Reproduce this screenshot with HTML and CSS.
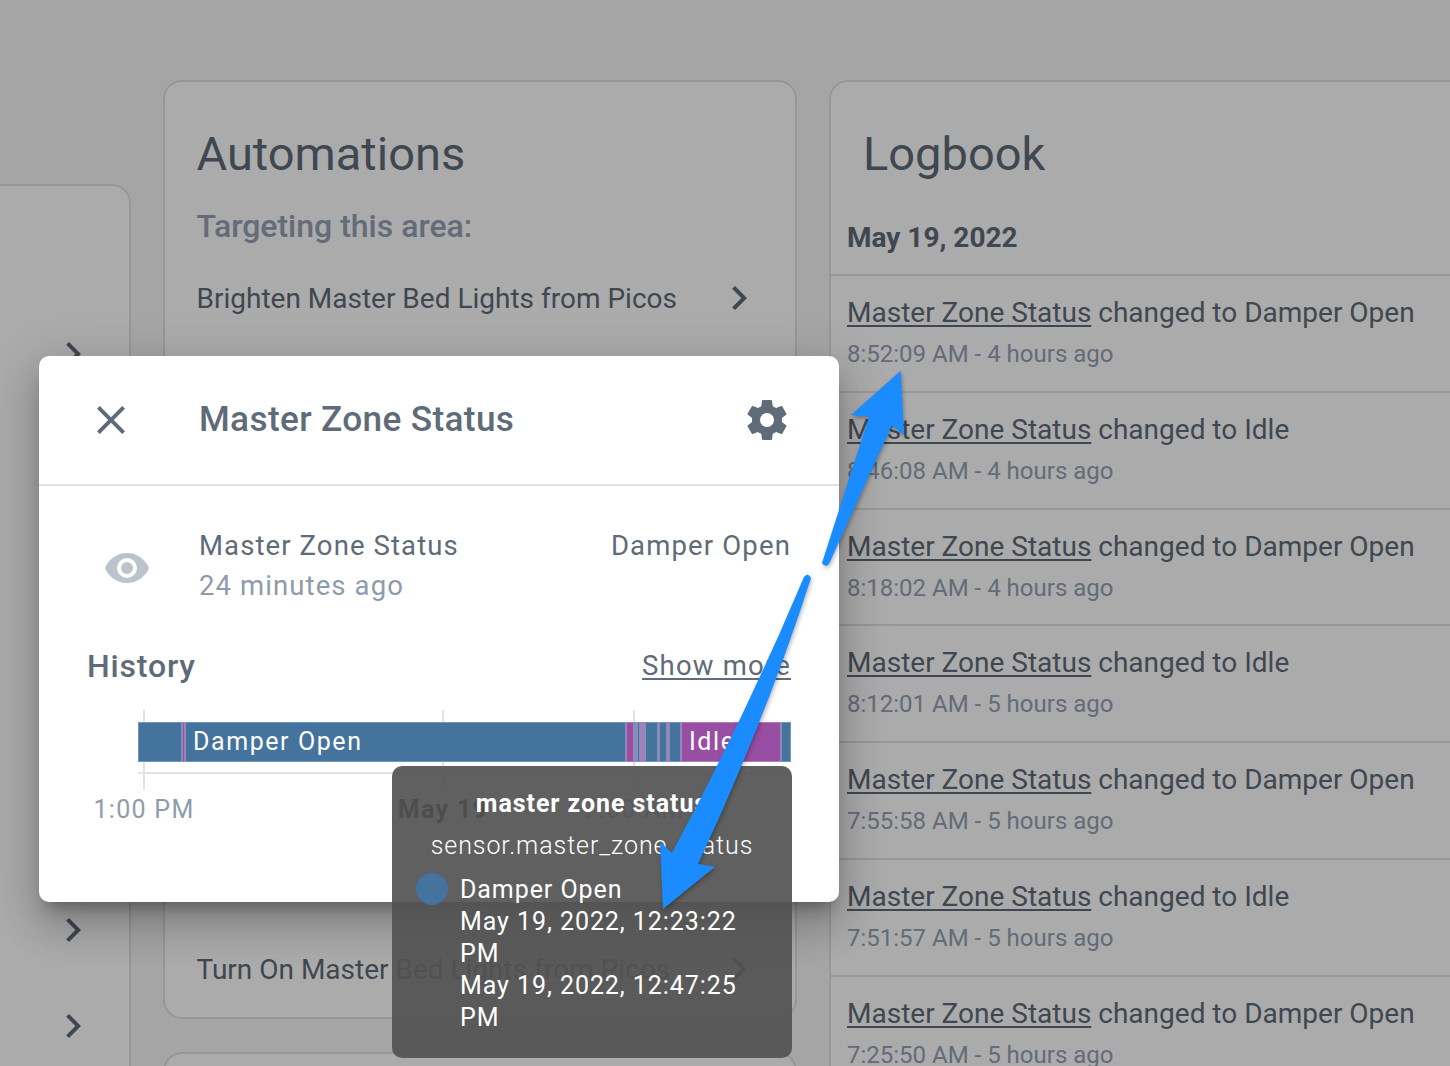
FILE: index.html
```html
<!DOCTYPE html>
<html lang="en">
<head>
<meta charset="utf-8">
<title>Master Zone Status</title>
<link rel="stylesheet" href="styles.css">
</head>
<body>
<div class="stage">
  <main class="page">
    <section class="card card-side">
      <div class="side-row"><svg class="icon chev" viewBox="0 0 24 24"><path d="M8.59,16.58L13.17,12L8.59,7.41L10,6L16,12L10,18L8.59,16.58Z"/></svg></div>
      <div class="side-row"></div>
      <div class="side-row"></div>
      <div class="side-row"></div>
      <div class="side-row"></div>
      <div class="side-row"></div>
      <div class="side-row"><svg class="icon chev" viewBox="0 0 24 24"><path d="M8.59,16.58L13.17,12L8.59,7.41L10,6L16,12L10,18L8.59,16.58Z"/></svg></div>
      <div class="side-row"><svg class="icon chev" viewBox="0 0 24 24"><path d="M8.59,16.58L13.17,12L8.59,7.41L10,6L16,12L10,18L8.59,16.58Z"/></svg></div>
    </section>

    <div class="column-mid">
      <section class="card card-auto">
        <h2 class="card-title">Automations</h2>
        <h3 class="sub-title">Targeting this area:</h3>
        <div class="auto-row"><span>Brighten Master Bed Lights from Picos</span><svg class="icon chev" viewBox="0 0 24 24"><path d="M8.59,16.58L13.17,12L8.59,7.41L10,6L16,12L10,18L8.59,16.58Z"/></svg></div>
        <div class="auto-gap"></div>
        <div class="auto-row"><span>Turn On Master Bed Lights from Picos</span><svg class="icon chev" viewBox="0 0 24 24"><path d="M8.59,16.58L13.17,12L8.59,7.41L10,6L16,12L10,18L8.59,16.58Z"/></svg></div>
      </section>
      <section class="card card-next"></section>
    </div>

    <section class="card card-log">
      <h2 class="card-title log-title">Logbook</h2>
      <div class="log-date">May 19, 2022</div>
      <div class="log-row"><div class="log-main"><a>Master Zone Status</a> changed to Damper Open</div><div class="log-time">8:52:09 AM - 4 hours ago</div></div>
      <div class="log-row"><div class="log-main"><a>Master Zone Status</a> changed to Idle</div><div class="log-time">8:46:08 AM - 4 hours ago</div></div>
      <div class="log-row"><div class="log-main"><a>Master Zone Status</a> changed to Damper Open</div><div class="log-time">8:18:02 AM - 4 hours ago</div></div>
      <div class="log-row"><div class="log-main"><a>Master Zone Status</a> changed to Idle</div><div class="log-time">8:12:01 AM - 5 hours ago</div></div>
      <div class="log-row"><div class="log-main"><a>Master Zone Status</a> changed to Damper Open</div><div class="log-time">7:55:58 AM - 5 hours ago</div></div>
      <div class="log-row"><div class="log-main"><a>Master Zone Status</a> changed to Idle</div><div class="log-time">7:51:57 AM - 5 hours ago</div></div>
      <div class="log-row"><div class="log-main"><a>Master Zone Status</a> changed to Damper Open</div><div class="log-time">7:25:50 AM - 5 hours ago</div></div>
    </section>
  </main>

  <div class="scrim"></div>

  <div class="modal">
    <header class="modal-head">
      <svg class="icon icon-close" viewBox="0 0 24 24"><path d="M19,6.41L17.59,5L12,10.59L6.41,5L5,6.41L10.59,12L5,17.59L6.41,19L12,13.41L17.59,19L19,17.59L13.41,12L19,6.41Z"/></svg>
      <h1 class="modal-title">Master Zone Status</h1>
      <svg class="icon icon-cog" viewBox="0 0 24 24"><path d="M12,15.5A3.5,3.5 0 0,1 8.5,12A3.5,3.5 0 0,1 12,8.5A3.5,3.5 0 0,1 15.5,12A3.5,3.5 0 0,1 12,15.5M19.43,12.97C19.47,12.65 19.5,12.33 19.5,12C19.5,11.67 19.47,11.34 19.43,11L21.54,9.37C21.73,9.22 21.78,8.95 21.66,8.73L19.66,5.27C19.54,5.05 19.27,4.96 19.05,5.05L16.56,6.05C16.04,5.66 15.5,5.32 14.87,5.07L14.5,2.42C14.46,2.18 14.25,2 14,2H10C9.75,2 9.54,2.18 9.5,2.42L9.13,5.07C8.5,5.32 7.96,5.66 7.44,6.05L4.95,5.05C4.73,4.96 4.46,5.05 4.34,5.27L2.34,8.73C2.21,8.95 2.27,9.22 2.46,9.37L4.57,11C4.53,11.34 4.5,11.67 4.5,12C4.5,12.33 4.53,12.65 4.57,12.97L2.46,14.63C2.27,14.78 2.21,15.05 2.34,15.27L4.34,18.73C4.46,18.95 4.73,19.03 4.95,18.95L7.44,17.94C7.96,18.34 8.5,18.68 9.13,18.93L9.5,21.58C9.54,21.82 9.75,22 10,22H14C14.25,22 14.46,21.82 14.5,21.58L14.87,18.93C15.5,18.67 16.04,18.34 16.56,17.94L19.05,18.95C19.27,19.03 19.54,18.95 19.66,18.73L21.66,15.27C21.78,15.05 21.73,14.78 21.54,14.63L19.43,12.97Z"/></svg>
    </header>
    <div class="modal-body">
      <div class="info-row">
        <svg class="icon icon-eye" viewBox="0 0 24 24"><path d="M12,9A3,3 0 0,0 9,12A3,3 0 0,0 12,15A3,3 0 0,0 15,12A3,3 0 0,0 12,9M12,17A5,5 0 0,1 7,12A5,5 0 0,1 12,7A5,5 0 0,1 17,12A5,5 0 0,1 12,17M12,4.5C7,4.5 2.73,7.61 1,12C2.73,16.39 7,19.5 12,19.5C17,19.5 21.27,16.39 23,12C21.27,7.61 17,4.5 12,4.5Z"/></svg>
        <div class="info-text">
          <div class="info-name">Master Zone Status</div>
          <div class="info-ago">24 minutes ago</div>
        </div>
        <div class="info-state">Damper Open</div>
      </div>
      <div class="history-head">
        <h2 class="history-title">History</h2>
        <a class="show-more">Show more</a>
      </div>
      <div class="chart">
        <i class="grid-v grid-a"></i><i class="grid-v grid-b"></i><i class="grid-v grid-c"></i>
        <div class="bar">
          <div class="seg blue" style="width:44px"></div>
          <div class="seg purple" style="width:3px"></div>
          <div class="seg blue" style="width:441px"><span>Damper Open</span></div>
          <div class="seg purple" style="width:8.3px"></div>
          <div class="seg blue" style="width:1.4px"></div>
          <div class="seg purple" style="width:1.3px"></div>
          <div class="seg blue" style="width:3px"></div>
          <div class="seg purple" style="width:1.7px"></div>
          <div class="seg blue" style="width:1px"></div>
          <div class="seg purple" style="width:2.6px"></div>
          <div class="seg blue" style="width:12.4px"></div>
          <div class="seg purple" style="width:1.6px"></div>
          <div class="seg blue" style="width:7.4px"></div>
          <div class="seg purple" style="width:2.3px"></div>
          <div class="seg blue" style="width:12px"></div>
          <div class="seg purple" style="width:100px"><span>Idle</span></div>
          <div class="seg blue" style="width:10px"></div>
        </div>
        <div class="axis">
          <span class="tick tick-a">1:00 PM</span>
          <span class="tick tick-b">May 19</span>
          <span class="tick tick-c">7:00 AM</span>
        </div>
      </div>
    </div>
  </div>

  <div class="tooltip">
    <div class="tip-title">master zone status</div>
    <div class="tip-id">sensor.master_zone_status</div>
    <div class="tip-row">
      <span class="tip-dot"></span>
      <div class="tip-lines">
        <div>Damper Open</div>
        <div>May 19, 2022, 12:23:22 PM</div>
        <div>May 19, 2022, 12:47:25 PM</div>
      </div>
    </div>
  </div>

  <svg class="arrows" viewBox="0 0 1450 1066">
    <path d="M900.7,370.7 L851,415 L869,416.7 L822,563 Q825,568 829,564 L891.7,425.7 L904,435 Z"/>
    <path d="M663,909 L715,866.7 L698,864 Q765,721 811,578 Q808,572 804,577 Q746,715 672,853 L660,842 Z"/>
  </svg>
</div>
</body>
</html>
```
FILE: styles.css
```css
* { box-sizing: border-box; }
html, body { margin: 0; padding: 0; }
body {
  font-family: Roboto, "Noto Sans", sans-serif;
  color: #5f6b78;
  background: #f7f7f7;
}
h1, h2, h3 { margin: 0; font-weight: 400; }
.stage {
  position: relative;
  width: 1450px;
  height: 1066px;
  overflow: hidden;
}
.page {
  display: flex;
  align-items: flex-start;
  gap: 32px;
  width: 1700px;
}
.icon { display: block; width: 48px; height: 48px; fill: currentColor; flex: none; }
.card {
  background: #fff;
  border: 2px solid #e2e2e2;
  border-radius: 19px;
}
.card-side {
  flex: none;
  width: 131px;
  margin-top: 184px;
  padding-top: 120px;
  border-left: 0;
  border-top-left-radius: 0;
  border-bottom-left-radius: 0;
  height: 1100px;
}
.side-row {
  display: flex;
  align-items: center;
  height: 96px;
  padding-left: 49px;
}
.column-mid {
  flex: none;
  width: 634px;
  margin-top: 80px;
  display: flex;
  flex-direction: column;
  gap: 33px;
}
.card-auto { height: 939px; padding: 43px 32px 0 31.5px; }
.card-next { height: 100px; }
.card-title { font-size: 47px; line-height: 58px; letter-spacing: 0; }
.sub-title { margin-top: 23px; margin-bottom: 4px; font-size: 32px; line-height: 40px; font-weight: 500; color: #94a1b3; }
.auto-row {
  display: flex;
  align-items: center;
  justify-content: space-between;
  height: 96px;
  font-size: 28px;
}
.auto-gap { height: 575px; }
.card-log {
  flex: none;
  width: 700px;
  height: 1100px;
  margin-top: 80px;
}
.log-title { padding: 43px 0 0 32px; }
.log-date { padding: 37px 0 0 16px; height: 91px; font-size: 28px; line-height: 36px; font-weight: 700; }
.log-row {
  height: 116.75px;
  border-top: 2px solid #e2e2e2;
  padding: 17px 0 0 16px;
}
.log-main { font-size: 28px; line-height: 40px; white-space: nowrap; }
.log-main a { text-decoration: underline; text-underline-offset: 3px; }
.log-time { font-size: 24px; line-height: 40px; margin-top: 1px; color: #94a1b3; white-space: nowrap; }

.scrim { position: absolute; inset: 0; background: rgba(0, 0, 0, .33); }

.modal {
  position: absolute;
  left: 39px;
  top: 356px;
  width: 800px;
  height: 546px;
  background: #fff;
  border-radius: 10px;
  color: #5f6b78;
  box-shadow: 0 26px 38px 3px rgba(0, 0, 0, .14), 0 10px 48px 8px rgba(0, 0, 0, .12), 0 13px 16px -8px rgba(0, 0, 0, .3);
}
.modal-head {
  display: flex;
  align-items: center;
  height: 130px;
  padding: 0 48px 2px 48px;
  border-bottom: 2px solid #e2e2e2;
}
.icon-close, .icon-cog { margin-top: 2px; }
.modal-title {
  flex: 1;
  margin-left: 64px;
  font-size: 35.2px;
  font-weight: 500;
  letter-spacing: .35px;
}
.modal-body { padding: 0 48px; }
.info-row { display: flex; align-items: center; padding-top: 40px; }
.icon-eye { color: #bcc3cc; margin-left: 16px; margin-top: 4px; }
.info-text { flex: 1; margin-left: 48px; }
.info-name { font-size: 27.5px; line-height: 40px; letter-spacing: 1.1px; }
.info-ago { font-size: 27.5px; line-height: 40px; letter-spacing: 1.1px; color: #8e9bac; }
.info-state { align-self: flex-start; font-size: 27.5px; line-height: 40px; letter-spacing: 1.15px; }
.history-head {
  display: flex;
  align-items: center;
  justify-content: space-between;
  margin-top: 38px;
  height: 44px;
}
.history-title { font-size: 32px; font-weight: 500; letter-spacing: .83px; }
.show-more { font-size: 27.5px; letter-spacing: 1.2px; text-decoration: underline; text-underline-offset: 3px; margin-top: -2px; }

.chart { position: relative; margin-top: 22px; height: 120px; }
.grid-v { position: absolute; top: 0; width: 2px; height: 80px; background: #e2e2e2; }
.grid-a { left: 56px; }
.grid-b { left: 355px; }
.grid-c { left: 546px; }
.bar {
  position: absolute;
  left: 51px;
  top: 12px;
  width: 653px;
  height: 40px;
  display: flex;
}
.bar::after {
  content: "";
  position: absolute;
  left: 0;
  right: 0;
  top: 50px;
  height: 2px;
  background: #e2e2e2;
}
.seg {
  flex: none;
  height: 100%;
  overflow: hidden;
  color: #fff;
  font-size: 25px;
  line-height: 40px;
  letter-spacing: 1.58px;
  box-shadow: inset 0 0 0 1px rgba(255, 255, 255, .25);
  white-space: nowrap;
}
.seg span { display: block; padding-left: 8px; }
.blue { background: #44739e; }
.purple { background: #984ea3; }
.axis { position: absolute; left: 0; top: 84px; width: 100%; height: 32px; }
.tick {
  position: absolute;
  transform: translateX(-50%);
  font-size: 25px;
  line-height: 32px;
  letter-spacing: 1.3px;
  color: #8e9bac;
  white-space: nowrap;
}
.tick-a { left: 57px; }
.tick-b { left: 356px; font-weight: 700; color: #111; }
.tick-c { left: 547px; }

.tooltip {
  position: absolute;
  left: 392px;
  top: 766px;
  width: 400px;
  height: 292px;
  padding: 22px 24px 0;
  background: rgba(83, 83, 83, .92);
  border-radius: 10px;
  color: #fff;
  font-size: 25px;
  letter-spacing: .93px;
}
.tip-title { text-align: center; font-weight: 700; line-height: 32px; }
.tip-id { text-align: center; font-weight: 300; line-height: 32px; margin-top: 10px; white-space: nowrap; }
.tip-row { display: flex; margin-top: 12px; }
.tip-dot { flex: none; width: 32px; height: 32px; border-radius: 50%; background: #44739e; margin-top: -1px; }
.tip-lines { margin-left: 12px; line-height: 32px; }

.arrows {
  position: absolute;
  inset: 0;
  width: 1450px;
  height: 1066px;
  fill: #1a8cff;
  filter: drop-shadow(1px 2px 2px rgba(0, 0, 0, .3));
}
```
